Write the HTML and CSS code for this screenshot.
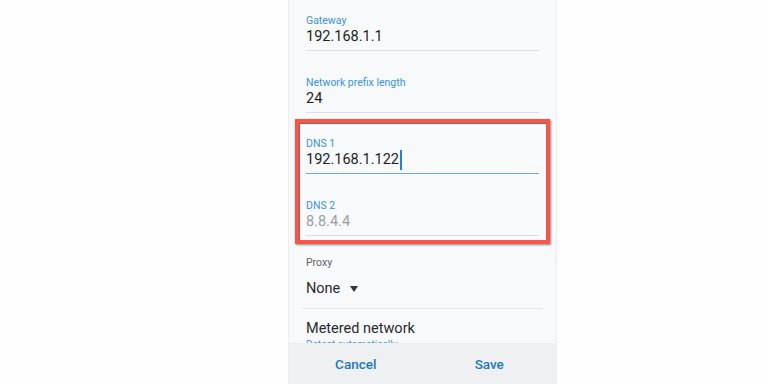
FILE: index.html
```html
<!DOCTYPE html>
<html>
<head>
<meta charset="utf-8">
<link rel="stylesheet" href="styles.css">
</head>
<body>
<div class="stage">
  <div class="panel">
    <div class="content">
      <div class="field">
        <div class="label">Gateway</div>
        <div class="value">192.168.1.1</div>
      </div>
      <div class="field">
        <div class="label">Network prefix length</div>
        <div class="value">24</div>
      </div>
      <div class="highlight">
        <div class="field focused">
          <div class="label">DNS 1</div>
          <div class="value">192.168.1.122<span class="cursor"></span></div>
        </div>
        <div class="field">
          <div class="label">DNS 2</div>
          <div class="value hint">8.8.4.4</div>
        </div>
      </div>
      <div class="proxy">
        <div class="label gray">Proxy</div>
        <div class="select">None <span class="arrow"></span></div>
      </div>
      <div class="metered">
        <div class="title">Metered network</div>
        <div class="sub">Detect automatically</div>
      </div>
    </div>
    <div class="actions">
      <div class="btn">Cancel</div>
      <div class="btn">Save</div>
    </div>
  </div>
</div>
</body>
</html>
```
FILE: styles.css
```css
html, body {
  margin: 0;
  padding: 0;
  background: #fefefe;
  font-family: Roboto, "Noto Sans", Arial, sans-serif;
}
.stage {
  display: flex;
  padding-left: 288px;
  height: 384px;
}
.panel {
  width: 267px;
  height: 384px;
  background: #f8f9fb;
  border-left: 1px solid #eceef1;
  border-right: 1px solid #eceef1;
  display: flex;
  flex-direction: column;
  overflow: hidden;
}
.content {
  flex: 1;
  overflow: hidden;
  padding: 15px 17px 0 17px;
  display: flex;
  flex-direction: column;
}
.field {
  height: 35px;
  flex: none;
  border-bottom: 1px solid #dcdee2;
}
.field + .field {
  margin-top: 26px;
}
.field.focused {
  border-bottom-color: #6fabe3;
}
.label {
  font-size: 10.5px;
  line-height: 12px;
  color: #3a94dc;
}
.label.gray {
  color: #606266;
}
.value {
  font-size: 14.5px;
  line-height: 20px;
  color: #1d1e21;
  display: flex;
  align-items: center;
}
.value.hint {
  color: #9c9da0;
}
.cursor {
  display: inline-block;
  width: 2px;
  height: 20px;
  background: #2a7fd0;
  margin-left: 1px;
}
.highlight {
  flex: none;
  margin: 6px -11px 0 -11px;
  border: 4px solid #f4564a;
  padding: 15px 7px 4px 7px;
  box-shadow: 1px 1px 2px rgba(0,0,0,0.45), inset 1px 1px 1px rgba(0,0,0,0.6);
}
.proxy {
  flex: none;
  padding-top: 13px;
  padding-bottom: 9px;
  margin: 0 -4px;
  padding-left: 4px;
  border-bottom: 1px solid #e5e7ea;
}
.select {
  margin-top: 10px;
  font-size: 14.5px;
  line-height: 20px;
  color: #2a2b2e;
  display: flex;
  align-items: center;
}
.arrow {
  display: inline-block;
  width: 0;
  height: 0;
  border-left: 4px solid transparent;
  border-right: 4px solid transparent;
  border-top: 6px solid #333;
  margin-left: 10px;
}
.metered {
  flex: none;
  padding-top: 10px;
}
.title {
  font-size: 14.5px;
  line-height: 20px;
  color: #2a2b2e;
}
.sub {
  font-size: 10px;
  line-height: 12px;
  color: #3a94dc;
}
.actions {
  height: 41px;
  flex: none;
  background: #eff0f2;
  display: flex;
}
.btn {
  flex: 1;
  display: flex;
  align-items: center;
  justify-content: center;
  font-size: 13.5px;
  font-weight: 500;
  color: #1b78cc;
}
```
